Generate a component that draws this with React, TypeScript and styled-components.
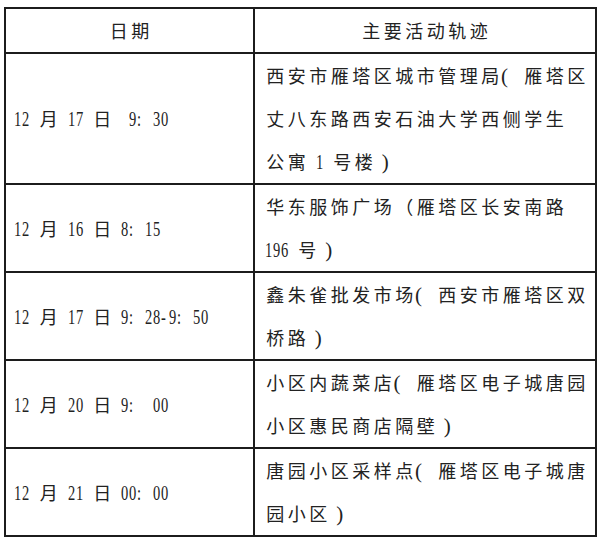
import React from "react";
import styled, { createGlobalStyle } from "styled-components";

const Global = createGlobalStyle`
  html, body { margin: 0; padding: 0; background: #ffffff; }
  body { font-family: "Noto Sans CJK SC", "Liberation Serif", sans-serif; color: #222222; }
`;

const Page = styled.div`
  padding: 7px 0 0 4px;
  width: 604px;
  height: 541px;
  box-sizing: border-box;
`;

const Table = styled.div`
  display: grid;
  grid-template-columns: 249px 1fr;
  width: 593px;
  box-sizing: border-box;
  border-top: 2px solid #1c1c1c;
  border-left: 2px solid #1c1c1c;
`;

const Cell = styled.div<{ $align: "center" | "start"; $pad?: number }>`
  display: flex;
  flex-direction: column;
  justify-content: center;
  align-items: ${(p) => (p.$align === "center" ? "center" : "flex-start")};
  padding-left: ${(p) => p.$pad ?? 0}px;
  border-right: 2px solid #1c1c1c;
  border-bottom: 2px solid #1c1c1c;
  box-sizing: border-box;
  min-width: 0;
`;

const Line = styled.div`
  height: 43px;
  line-height: 43px;
  white-space: nowrap;
`;

const Han = styled.span`
  display: inline-block;
  width: 21.5px;
  text-align: center;
  font-family: "Noto Sans CJK SC", sans-serif;
  font-size: 18px;
  font-weight: 400;
  color: #222222;
`;

const Latin = styled.span<{ $w: number; $center?: boolean }>`
  display: inline-block;
  width: ${(p) => p.$w}px;
  text-align: ${(p) => (p.$center ? "center" : "left")};
  white-space: pre;
`;

const LatinGlyph = styled.span`
  display: inline-block;
  font-family: "Liberation Serif", serif;
  font-size: 22px;
  color: #222222;
  transform: scaleX(0.66);
  transform-origin: 0 50%;
`;

const Paren = styled.span`
  display: inline-block;
  font-family: "Liberation Serif", serif;
  font-size: 21px;
  color: #222222;
`;

function Rich({ text }: { text: string }) {
  return (
    <>
      {Array.from(text).map((c, i) => {
        if (c === "(" ) {
          return (
            <Latin key={i} $w={21.5}>
              <Paren>{c}</Paren>
            </Latin>
          );
        }
        if (c === ")") {
          return (
            <Latin key={i} $w={21.5} $center>
              <Paren>{c}</Paren>
            </Latin>
          );
        }
        if (c.charCodeAt(0) < 128) {
          return (
            <Latin key={i} $w={8}>
              <LatinGlyph>{c === " " ? "\u00a0" : c}</LatinGlyph>
            </Latin>
          );
        }
        return <Han key={i}>{c}</Han>;
      })}
    </>
  );
}

const rows: { date: string; place: string[] }[] = [
  {
    date: "12 月 17 日  9: 30",
    place: ["西安市雁塔区城市管理局(雁塔区", "丈八东路西安石油大学西侧学生", "公寓 1 号楼)"],
  },
  { date: "12 月 16 日 8: 15", place: ["华东服饰广场（雁塔区长安南路", "196 号)"] },
  { date: "12 月 17 日 9: 28-9: 50", place: ["鑫朱雀批发市场(西安市雁塔区双", "桥路)"] },
  { date: "12 月 20 日 9:  00", place: ["小区内蔬菜店(雁塔区电子城唐园", "小区惠民商店隔壁)"] },
  { date: "12 月 21 日 00: 00", place: ["唐园小区采样点(雁塔区电子城唐", "园小区)"] },
];

export default function App() {
  return (
    <>
      <Global />
      <Page>
        <Table>
          <Cell $align="center">
            <Line>
              <Rich text="日期" />
            </Line>
          </Cell>
          <Cell $align="center">
            <Line>
              <Rich text="主要活动轨迹" />
            </Line>
          </Cell>
          {rows.map((r, i) => (
            <React.Fragment key={i}>
              <Cell $align="start" $pad={8}>
                <Line>
                  <Rich text={r.date} />
                </Line>
              </Cell>
              <Cell $align="start" $pad={9.5}>
                {r.place.map((l, j) => (
                  <Line key={j}>
                    <Rich text={l} />
                  </Line>
                ))}
              </Cell>
            </React.Fragment>
          ))}
        </Table>
      </Page>
    </>
  );
}
